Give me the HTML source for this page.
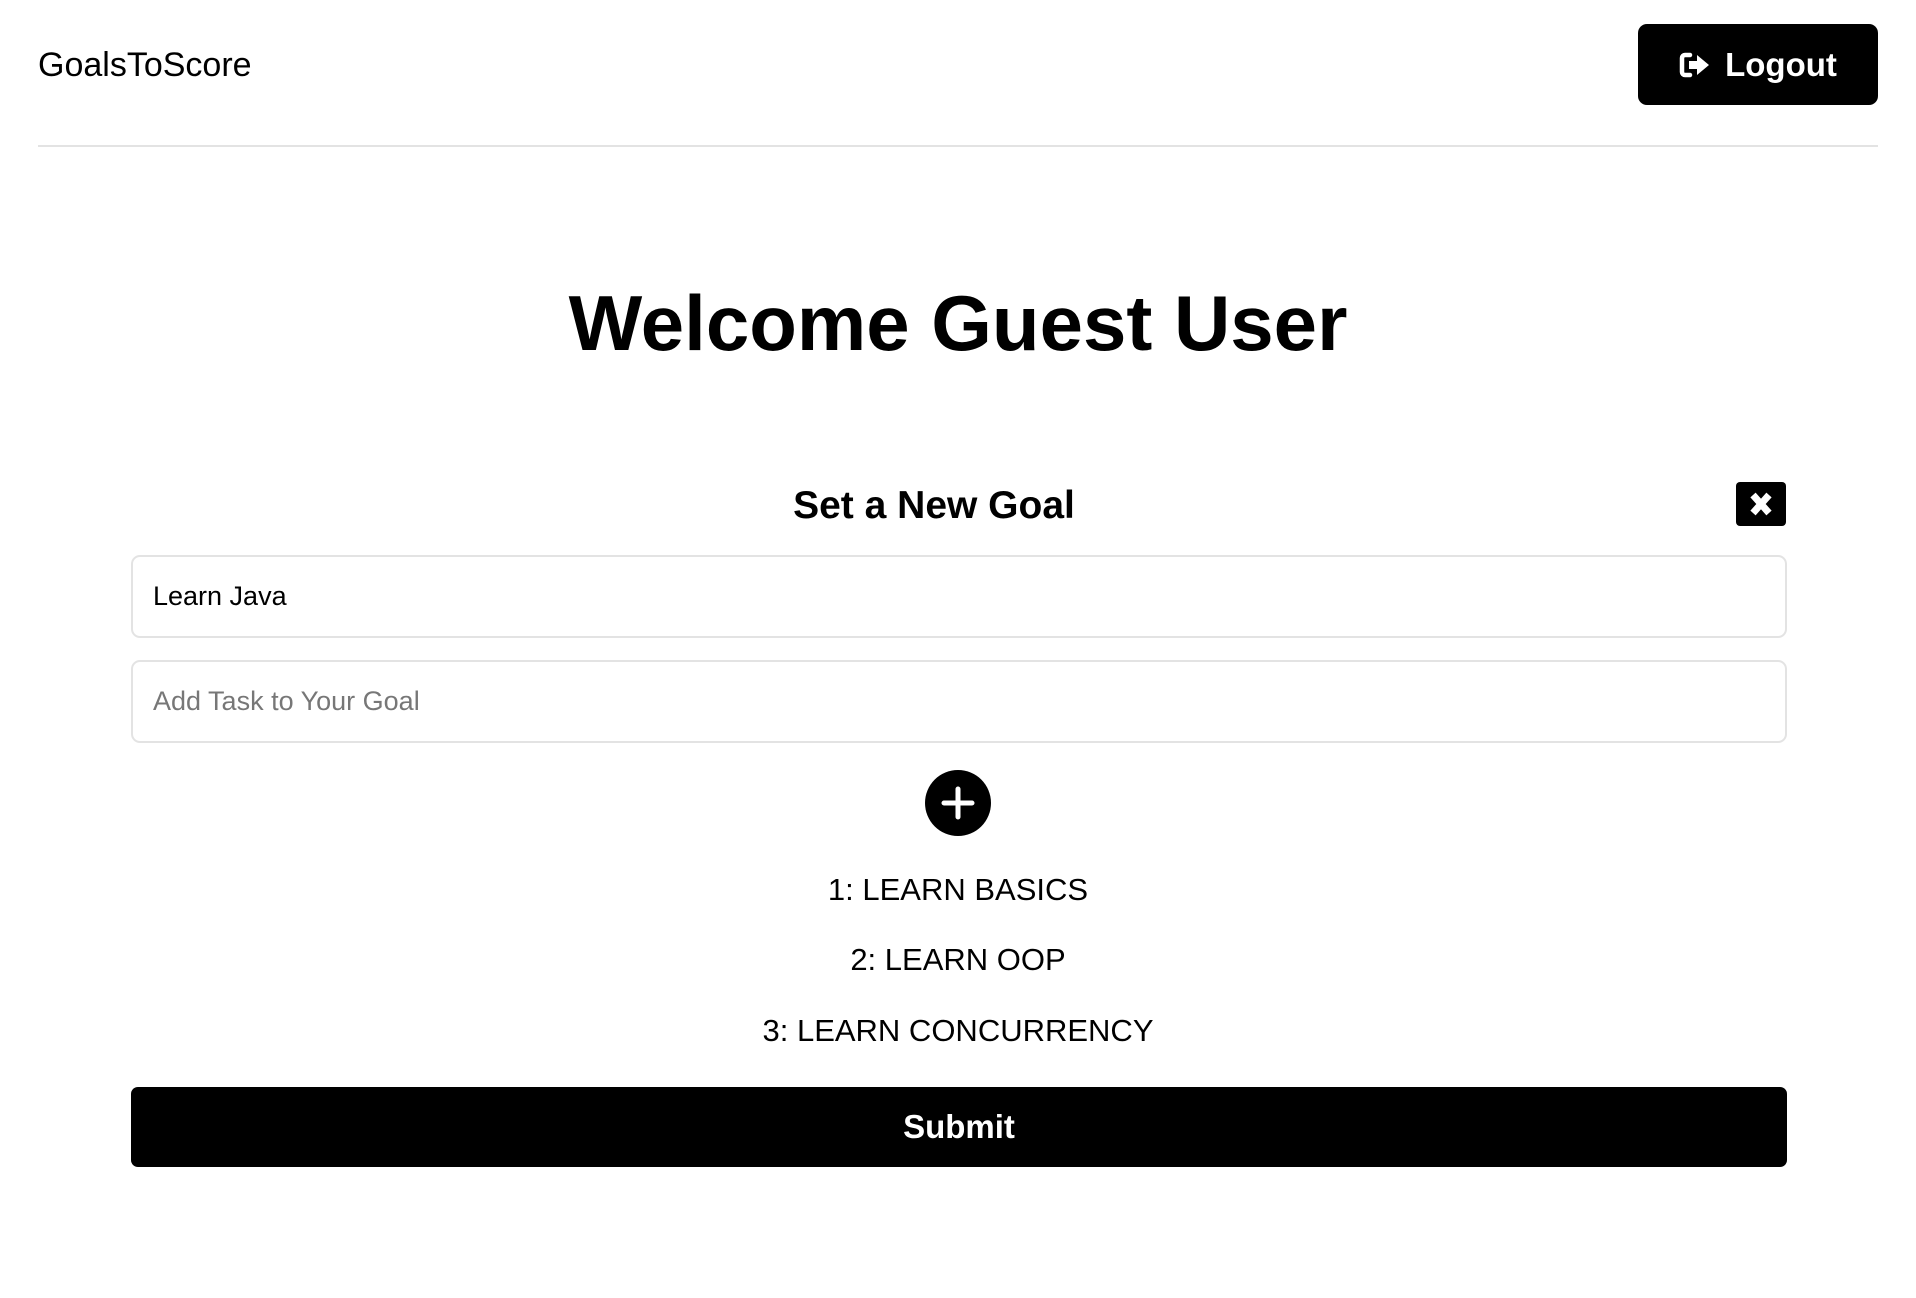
<!DOCTYPE html>
<html><head><meta charset="utf-8"><style>
*{box-sizing:border-box;margin:0;padding:0}
body{width:1916px;height:1298px;background:#fff;font-family:"Liberation Sans",sans-serif;color:#000;position:relative;overflow:hidden}
.a{position:absolute}
.logo{left:38px;top:46px;font-size:34px}
.btn{left:1638px;top:24px;width:240px;height:81px;background:#000;border-radius:9px;color:#fff;font-weight:bold;font-size:33px;display:flex;align-items:center;justify-content:center;gap:14px}
.hr{left:38px;top:145px;width:1840px;height:2px;background:#e3e3e3}
h1{position:absolute;left:0;width:1916px;text-align:center;top:278px;font-size:78px;font-weight:bold}
.sg{left:0;width:1868px;text-align:center;top:484px;font-size:39px;font-weight:bold}
.x{left:1736px;top:482px;width:50px;height:44px;background:#000;border-radius:4px}
.in{left:131px;width:1663px;height:83px;border:2px solid #e3e3e3;border-radius:9px;font-size:27px;padding-left:20px;display:flex;align-items:center}
.plus{left:925px;top:770px;width:66px;height:66px;border-radius:50%;background:#000}
.t{left:0;width:1916px;text-align:center;font-size:31px}
.sub{left:131px;top:1087px;width:1663px;height:80px;background:#000;border-radius:7px;color:#fff;font-weight:bold;font-size:33px;display:flex;align-items:center;justify-content:center}
</style></head><body>
<div class="a logo">GoalsToScore</div>
<div class="a btn"><svg width="32" height="28" viewBox="0 0 32 28"><path d="M11 4H6a3 3 0 0 0-3 3v14a3 3 0 0 0 3 3h5" fill="none" stroke="#fff" stroke-width="4.5" stroke-linecap="round"/><path d="M10 10h8V4l12 10-12 10v-6h-8z" fill="#fff"/></svg>Logout</div>
<div class="a hr"></div>
<h1>Welcome Guest User</h1>
<div class="a sg">Set a New Goal</div>
<div class="a x"><svg width="50" height="44" viewBox="0 0 50 44"><path d="M17 13l16 18M33 13L17 31" stroke="#fff" stroke-width="7"/></svg></div>
<div class="a in" style="top:555px;width:1656px">Learn Java</div>
<div class="a in" style="top:660px;width:1656px;color:#777">Add Task to Your Goal</div>
<div class="a plus"><svg width="66" height="66" viewBox="0 0 66 66"><path d="M33 19v28M19 33h28" stroke="#fff" stroke-width="5" stroke-linecap="round"/></svg></div>
<div class="a t" style="top:872px">1: LEARN BASICS</div>
<div class="a t" style="top:942px">2: LEARN OOP</div>
<div class="a t" style="top:1013px">3: LEARN CONCURRENCY</div>
<div class="a sub" style="width:1656px">Submit</div>
</body></html>
